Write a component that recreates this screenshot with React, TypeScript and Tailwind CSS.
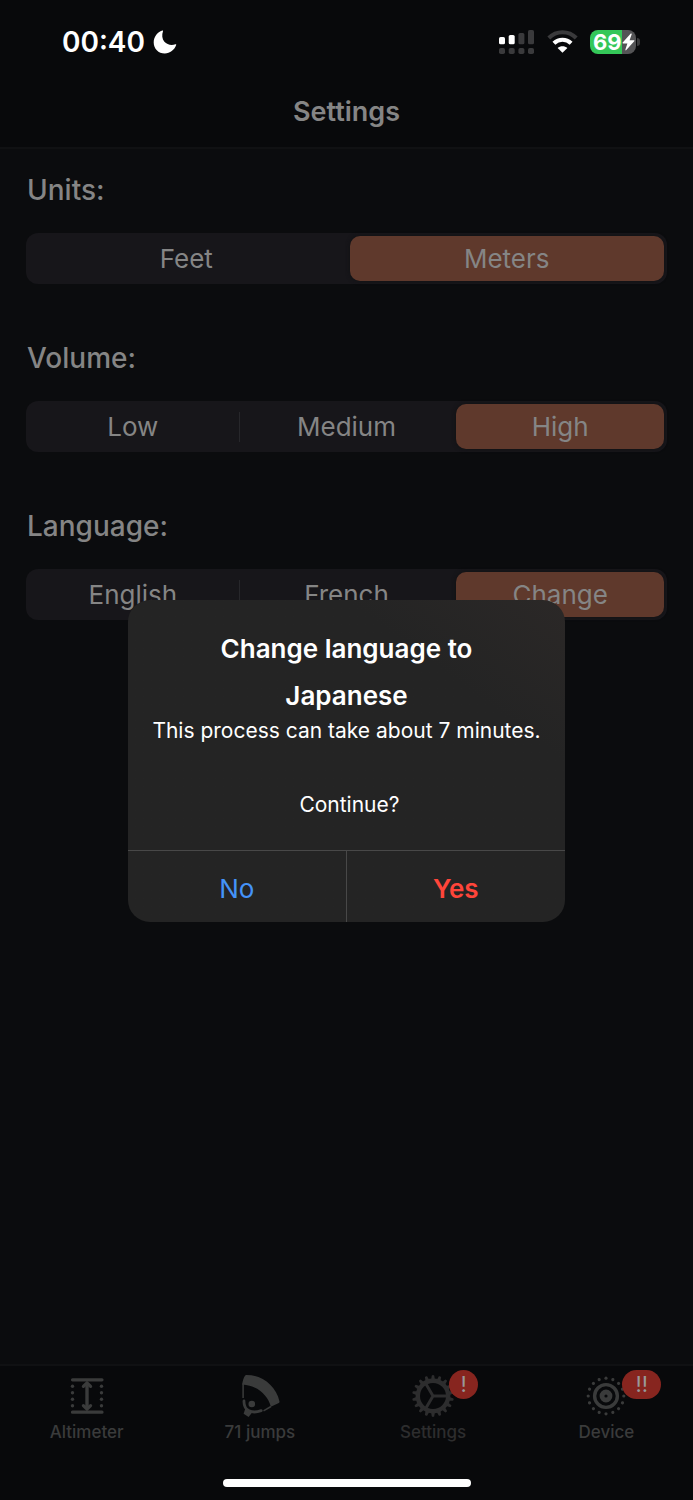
import { useState } from "react";
import type { ReactNode } from "react";
import clsx from "clsx";

interface SegmentedProps {
  label: string;
  options: string[];
  value: string;
  onChange: (value: string) => void;
}

function Segmented({ label, options, value, onChange }: SegmentedProps) {
  const selected = options.indexOf(value);

  return (
    <section aria-label={label}>
      <h2 className="pl-px text-[28px] leading-8 font-medium">{label}:</h2>
      <div
        className={clsx(
          "mt-[27px] grid h-[51px] rounded-xl bg-[#17161a]",
          options.length === 2 ? "grid-cols-2" : "grid-cols-3",
        )}
      >
        {options.map((option, i) => (
          <div key={option} className="flex items-center">
            <button
              type="button"
              aria-pressed={i === selected}
              onClick={() => onChange(option)}
              className={clsx(
                "m-[3px] h-[45px] flex-1 rounded-[10px] text-[26px]",
                i === selected && "bg-[#5f392c] shadow-[0_0_4px_#101113]",
              )}
            >
              {option}
            </button>
            {i < options.length - 1 && i !== selected && i + 1 !== selected && (
              <span className="-ml-px h-[30px] w-px bg-[#27272b]" />
            )}
          </div>
        ))}
      </div>
    </section>
  );
}

function StatusBar() {
  return (
    <div className="flex h-[76px] items-center justify-between pt-[7px] pr-[53px] pl-[62px] text-white">
      <div className="flex items-center gap-2">
        <span className="text-[28px] leading-8 font-semibold">00:40</span>
        <svg width="24" height="24" viewBox="0 0 24 24" fill="currentColor" aria-hidden="true">
          <path d="M9.3 .6C9.9.3 10.2.8 10 1.3C8.7 5 9 9 11.4 11.8C14 14.8 18.5 15.7 22.4 14.3C23.1 14 23.5 14.4 23.2 15C21.4 20 17 23.4 11.8 23.4C5.4 23.4.7 18.6.7 12.4C.7 7 4.3 2.3 9.3.6Z" />
        </svg>
      </div>

      <div className="flex items-center gap-3">
        <svg width="36" height="24" viewBox="0 0 36 24" aria-label="Signal">
          <g fill="#fff">
            <rect x="0" y="7" width="6" height="7.3" rx="1.6" />
            <rect x="9.7" y="5" width="6" height="9.3" rx="1.6" />
          </g>
          <g fill="#3a3a3c">
            <rect x="19.4" y="3" width="6" height="11.3" rx="1.6" />
            <rect x="29" y="0" width="6" height="14.3" rx="1.6" />
            <rect x="0" y="18" width="6" height="6" rx="1.8" />
            <rect x="9.7" y="18" width="6" height="6" rx="1.8" />
            <rect x="19.4" y="18" width="6" height="6" rx="1.8" />
            <rect x="29" y="18" width="6" height="6" rx="1.8" />
          </g>
        </svg>
        <svg width="31" height="24" viewBox="0 0 31 24" fill="none" aria-label="Wi-Fi">
          <path d="M1.8 8C9.3 .2 21.7 .2 29.2 8" stroke="#3a3a3c" strokeWidth="4" />
          <path d="M6.9 13.2C11.8 8.6 19.2 8.6 24.1 13.2" stroke="#fff" strokeWidth="4.2" />
          <path d="M15.5 22.8L10.6 18C13.3 15.5 17.7 15.5 20.4 18Z" fill="#fff" />
        </svg>
        <div className="flex items-center gap-px">
          <div className="flex h-6 w-[46px] items-center overflow-hidden rounded-lg bg-linear-to-r from-[#34c759] from-70% to-[#545456] to-70% pl-[3px]">
            <span className="text-[22px] leading-6 font-bold">69</span>
            <svg width="13" height="18" viewBox="0 0 13 18" fill="currentColor" aria-label="Charging">
              <path d="M8.8.6L.7 9.6C.3 10.1.5 10.5 1.1 10.5H5.4L3.4 16.6C3.2 17.4 3.8 17.7 4.3 17.1L12.2 8.2C12.6 7.7 12.4 7.2 11.8 7.2H7.6L9.7 1.2C9.9.5 9.3.1 8.8.6Z" />
            </svg>
          </div>
          <span className="h-2 w-[3px] rounded-r-full bg-[#3a3a3c]" />
        </div>
      </div>
    </div>
  );
}

function AltimeterIcon() {
  return (
    <svg width="44" height="44" viewBox="0 0 44 44" fill="none" stroke="currentColor" aria-hidden="true">
      <path d="M7.5 5.8H37M7.5 38.2H37" strokeWidth="3.2" strokeLinecap="round" />
      <path d="M22 9V35" strokeWidth="3.4" />
      <path
        d="M18.4 12.4L22 8.8L25.6 12.4M18.4 31.6L22 35.2L25.6 31.6"
        strokeWidth="3.2"
        strokeLinecap="round"
        strokeLinejoin="round"
      />
      <g fill="currentColor" stroke="none">
        {[12.3, 18.8, 25.3, 31.8].map((y) => (
          <g key={y}>
            <circle cx="7.5" cy={y} r="1.7" />
            <circle cx="36.5" cy={y} r="1.7" />
          </g>
        ))}
      </g>
    </svg>
  );
}

function JumpsIcon() {
  return (
    <svg width="44" height="44" viewBox="0 0 44 44" fill="none" stroke="currentColor" aria-hidden="true">
      <path
        d="M8.2 1C23.5 .8 38 11.5 41.5 27.5C41.6 28.2 41.4 28.6 40.8 28.9L32.9 32.7C30 21.5 19.5 11.3 4.2 10.6C4.4 7.5 5.6 3.5 7.2 1.5C7.4 1.2 7.7 1 8.2 1Z"
        fill="currentColor"
        stroke="none"
      />
      <path d="M5.1 9.5V24M33 32.5L25.5 36.8" strokeWidth="1.5" />
      <path
        d="M6 27C5.8 31.5 7.4 35 11 36.8C14.5 38.5 19 38.2 23.2 36.6"
        strokeWidth="2.8"
        strokeLinecap="round"
      />
      <path d="M7.5 34L5.6 39.8L10.6 43L14.5 38Z" fill="currentColor" stroke="none" />
      <circle cx="13.8" cy="30" r="3.3" fill="currentColor" stroke="none" />
    </svg>
  );
}

function GearIcon() {
  return (
    <svg width="44" height="44" viewBox="0 0 44 44" fill="none" stroke="currentColor" aria-hidden="true">
      <circle cx="22" cy="22" r="15.2" strokeWidth="4.4" />
      {Array.from({ length: 18 }, (_, i) => (
        <path
          key={i}
          d="M20 6L20.8 1.5Q22 .6 23.2 1.5L24 6Z"
          fill="currentColor"
          stroke="none"
          transform={`rotate(${i * 20} 22 22)`}
        />
      ))}
      <path d="M22 22H36M22 22L15 9.9M22 22L15 34.1" strokeWidth="3" />
    </svg>
  );
}

function DeviceIcon() {
  return (
    <svg width="44" height="44" viewBox="0 0 44 44" fill="none" stroke="currentColor" aria-hidden="true">
      <circle cx="22" cy="22" r="11.4" strokeWidth="3.4" />
      <circle cx="22" cy="22" r="4" strokeWidth="4.8" />
      {Array.from({ length: 16 }, (_, i) => (
        <circle
          key={i}
          cx="22"
          cy="4.2"
          r="1.6"
          fill="currentColor"
          stroke="none"
          transform={`rotate(${i * 22.5} 22 22)`}
        />
      ))}
    </svg>
  );
}

interface TabProps {
  label: string;
  icon: ReactNode;
  badge?: string;
  active?: boolean;
}

function Tab({ label, icon, badge, active }: TabProps) {
  return (
    <a
      href={`#${label.toLowerCase().replace(" ", "-")}`}
      aria-current={active ? "page" : undefined}
      className={clsx("flex flex-col items-center gap-1", active ? "text-[#2d2d2e]" : "text-[#3a3b3b]")}
    >
      <span className="relative">
        {icon}
        {badge && (
          <span
            className={clsx(
              "absolute -top-1 left-[38px] flex h-[29px] items-center justify-center rounded-full bg-[#87251f] pb-0.5 text-[22px] leading-none text-[#999]",
              badge.length > 1 ? "w-[39px]" : "w-[29px]",
            )}
          >
            {badge}
          </span>
        )}
      </span>
      <span className="text-[17px] leading-5 font-medium">{label}</span>
    </a>
  );
}

export default function App() {
  const [units, setUnits] = useState("Meters");
  const [volume, setVolume] = useState("High");
  const [language, setLanguage] = useState("Change");
  const [confirming, setConfirming] = useState(true);

  return (
    <div className="relative flex min-h-screen flex-col bg-[#0b0c0e] font-[Inter,sans-serif] text-[#858585]">
      <header className="border-b-2 border-[#101113] bg-[#08090b]">
        <StatusBar />
        <div className="flex h-[71px] items-center justify-center">
          <h1 className="text-[27px] leading-8 font-semibold">Settings</h1>
        </div>
      </header>

      <main className="flex flex-1 flex-col gap-[58px] px-[26px] pt-[25px]">
        <Segmented label="Units" options={["Feet", "Meters"]} value={units} onChange={setUnits} />
        <Segmented label="Volume" options={["Low", "Medium", "High"]} value={volume} onChange={setVolume} />
        <Segmented
          label="Language"
          options={["English", "French", "Change"]}
          value={language}
          onChange={setLanguage}
        />
      </main>

      <footer className="border-t-2 border-[#101113] bg-[#08090b] pt-2 pb-[13px]">
        <nav className="grid grid-cols-4">
          <Tab label="Altimeter" icon={<AltimeterIcon />} />
          <Tab label="71 jumps" icon={<JumpsIcon />} />
          <Tab label="Settings" icon={<GearIcon />} badge="!" active />
          <Tab label="Device" icon={<DeviceIcon />} badge="!!" />
        </nav>
        <div className="mx-auto mt-[37px] h-2 w-[248px] rounded-full bg-white" />
      </footer>

      {confirming && (
        <div className="absolute inset-0 flex items-center justify-center pt-[22px]">
          <div
            role="alertdialog"
            aria-labelledby="confirm-title"
            aria-describedby="confirm-message"
            className="w-[437px] overflow-hidden rounded-[22px] bg-[#242424] bg-linear-to-bl from-[#2b2827] to-[#242424] to-25% text-center text-white"
          >
            <div className="px-5 pt-[25px] pb-[34px]">
              <h2 id="confirm-title" className="mx-auto max-w-[300px] text-[26px] leading-[47px] font-semibold">
                Change language to Japanese
              </h2>
              <div id="confirm-message" className="text-[21px] leading-[23px]">
                <p>This process can take about 7 minutes.</p>
                <p className="mt-[51px]">&nbsp;Continue?</p>
              </div>
            </div>
            <div className="grid grid-cols-2 border-t border-[#484848] text-[26px]">
              <button
                type="button"
                onClick={() => setConfirming(false)}
                className="h-[71px] border-r border-[#484848] pt-1 text-[#4493f8]"
              >
                No
              </button>
              <button
                type="button"
                onClick={() => setConfirming(false)}
                className="h-[71px] pt-1 font-semibold text-[#ff453a]"
              >
                Yes
              </button>
            </div>
          </div>
        </div>
      )}
    </div>
  );
}
